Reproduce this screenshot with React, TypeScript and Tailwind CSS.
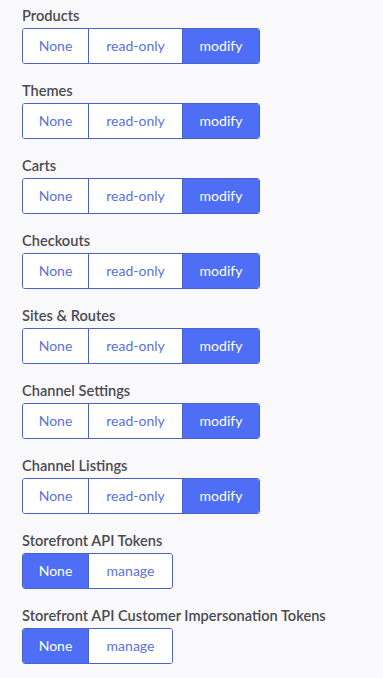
import { useState } from "react";

const sections = [
  { label: "Products", options: ["None", "read-only", "modify"], value: "modify" },
  { label: "Themes", options: ["None", "read-only", "modify"], value: "modify" },
  { label: "Carts", options: ["None", "read-only", "modify"], value: "modify" },
  { label: "Checkouts", options: ["None", "read-only", "modify"], value: "modify" },
  { label: "Sites & Routes", options: ["None", "read-only", "modify"], value: "modify" },
  { label: "Channel Settings", options: ["None", "read-only", "modify"], value: "modify" },
  { label: "Channel Listings", options: ["None", "read-only", "modify"], value: "modify" },
  { label: "Storefront API Tokens", options: ["None", "manage"], value: "None" },
  { label: "Storefront API Customer Impersonation Tokens", options: ["None", "manage"], value: "None" },
];

// segment widths as measured, left border included
const widths: Record<string, string> = {
  None: "w-[65px]",
  "read-only": "w-[94px]",
  modify: "w-[77px]",
  manage: "w-[84px]",
};

function Segmented({ options, value, onChange }: { options: string[]; value: string; onChange: (v: string) => void }) {
  return (
    <div className="flex w-max rounded-[3px] border border-[#4b62c9] overflow-hidden">
      {options.map((opt, i) => (
        <button
          key={opt}
          onClick={() => onChange(opt)}
          className={
            "h-[34px] text-center text-[14px] leading-5 " +
            widths[opt] +
            (i > 0 ? " border-l border-[#4b62c9]" : "") +
            (opt === value ? " bg-[#4d6ef5] text-white" : " bg-white text-[#5b72d8]")
          }
        >
          {opt}
        </button>
      ))}
    </div>
  );
}

export default function App() {
  const [values, setValues] = useState(sections.map(s => s.value));

  return (
    <div className="min-h-[678px] bg-[#f9f9fc] px-[22px] pt-[6px] font-['Lato',sans-serif]">
      <div className="flex flex-col gap-[17px]">
        {sections.map((s, i) => (
          <div key={s.label}>
            <div className="mb-[2px] text-[14.6px] leading-5 font-semibold text-[#4a4a52]">{s.label}</div>
            <Segmented
              options={s.options}
              value={values[i]}
              onChange={v => setValues(vals => vals.map((x, j) => (j === i ? v : x)))}
            />
          </div>
        ))}
      </div>
    </div>
  );
}
